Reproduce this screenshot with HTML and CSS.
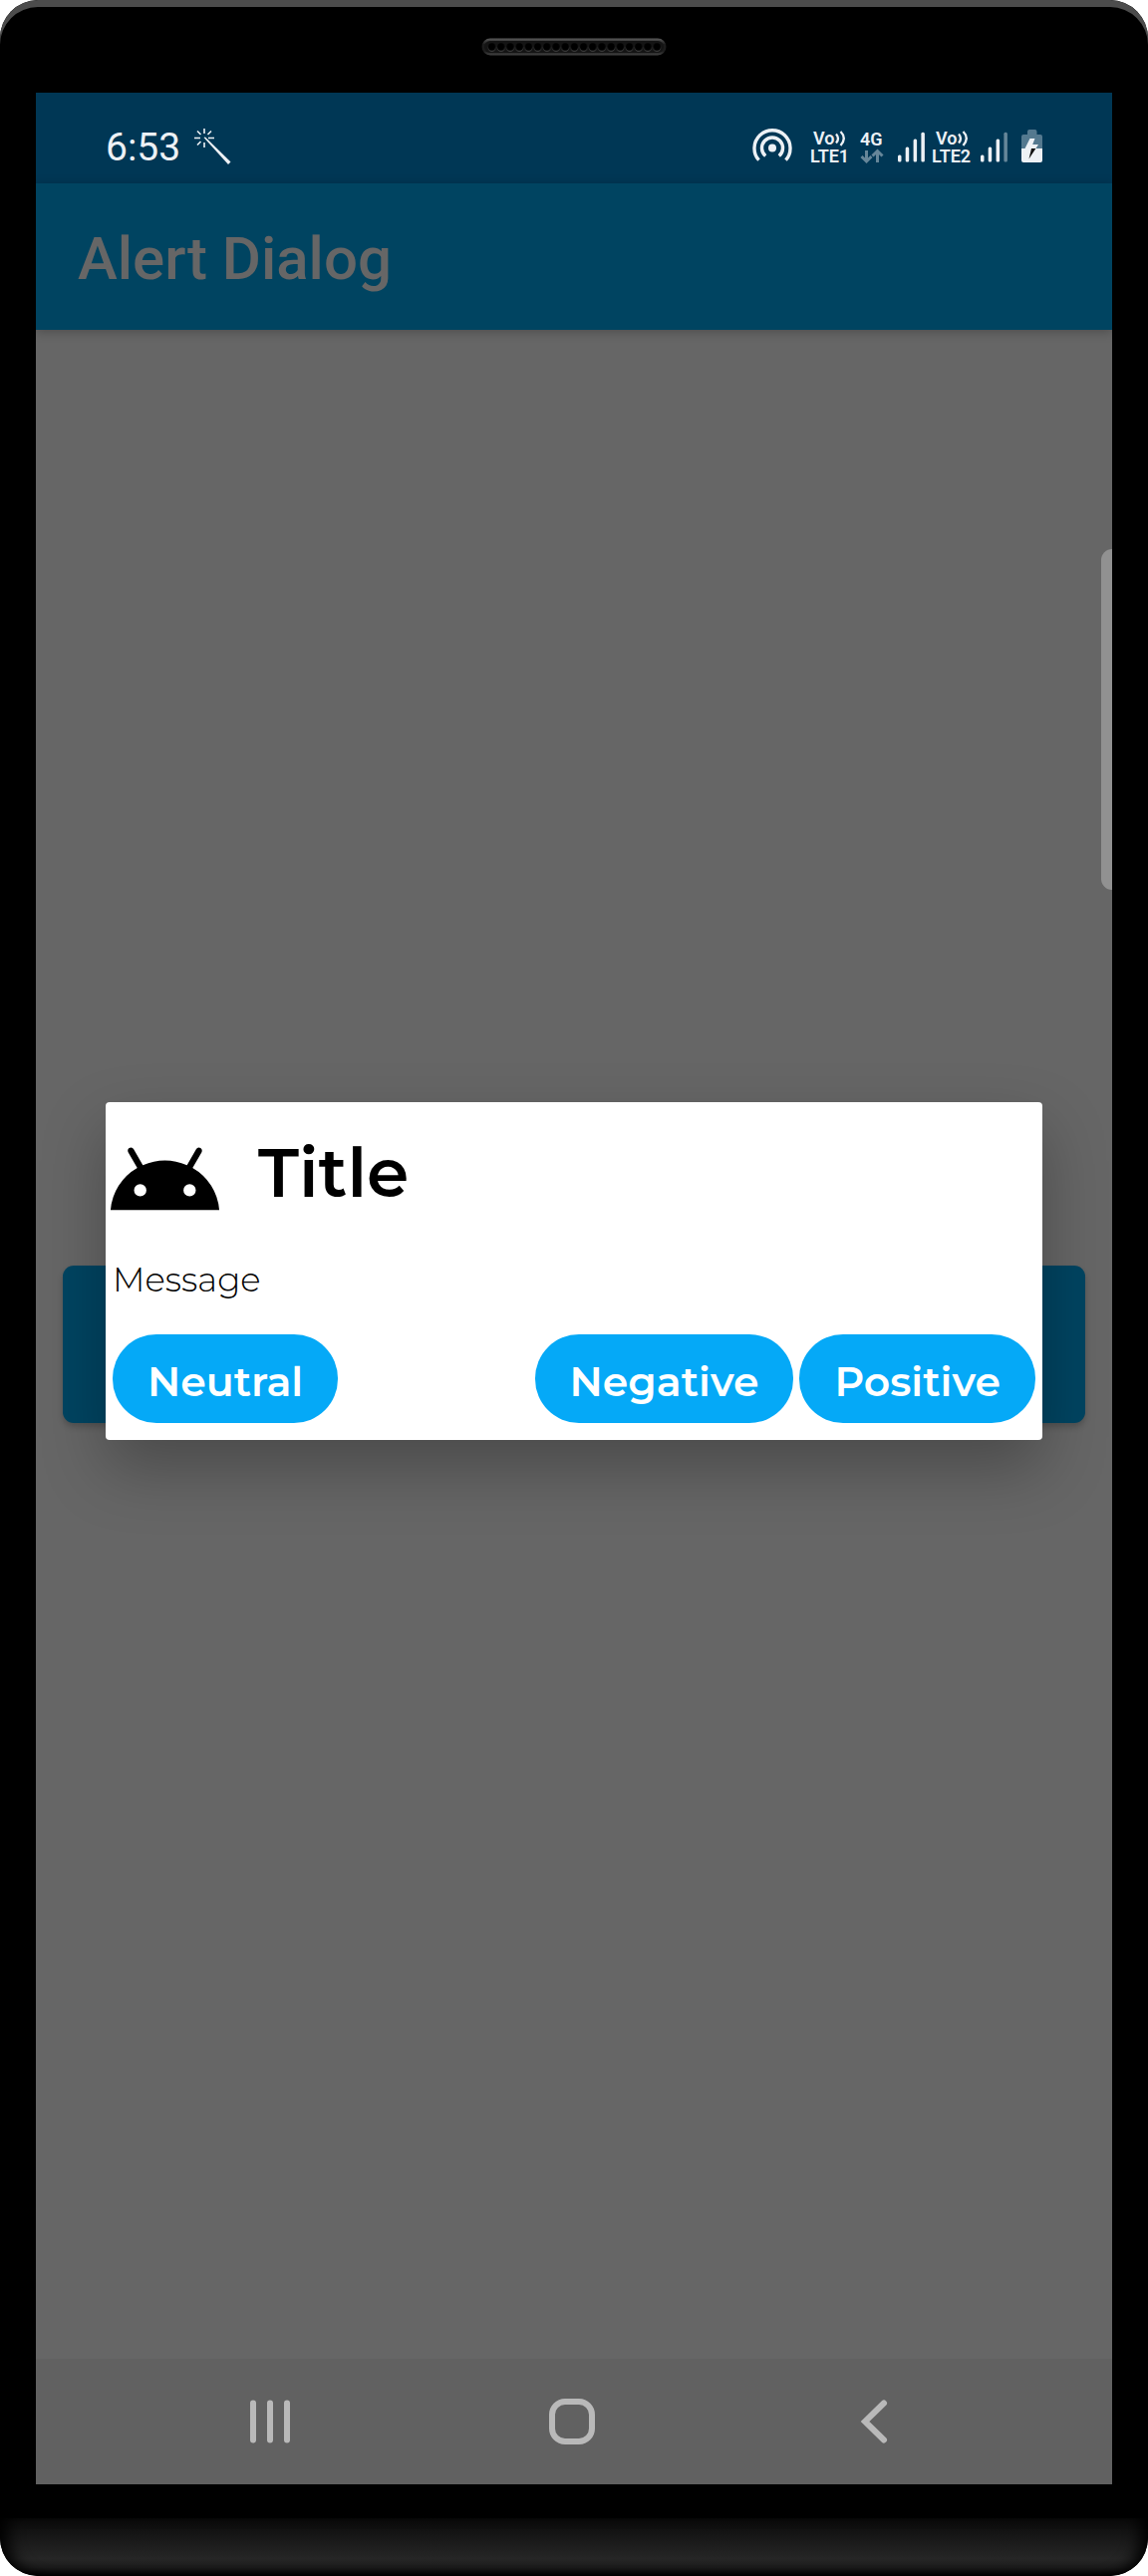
FILE: index.html
```html
<!DOCTYPE html>
<html lang="en">
<head>
<meta charset="utf-8">
<meta name="viewport" content="width=device-width, initial-scale=1">
<title>Alert Dialog</title>
<link rel="stylesheet" href="styles.css">
</head>
<body>
<div class="phone">
  <div class="bezel">
    <svg class="speaker" width="186" height="18" viewBox="0 0 186 18" aria-hidden="true">
      <defs>
        <linearGradient id="rim" x1="0" y1="0" x2="0" y2="1">
          <stop offset="0" stop-color="#5a5a5a"/><stop offset=".35" stop-color="#1c1c1c"/><stop offset=".75" stop-color="#1c1c1c"/><stop offset="1" stop-color="#444"/>
        </linearGradient>
        <pattern id="holes" x="6" y="0" width="9.2" height="18" patternUnits="userSpaceOnUse">
          <circle cx="4.6" cy="10" r="4" fill="#3a3a3a"/><circle cx="4.6" cy="9" r="3.7" fill="#000"/>
        </pattern>
      </defs>
      <rect x=".5" y=".5" width="185" height="17" rx="8.5" fill="url(#rim)"/>
      <rect x="3" y="3" width="180" height="12" rx="6" fill="#141414"/>
      <rect x="6" y="0" width="174.8" height="18" fill="url(#holes)"/>
    </svg>
  </div>

  <div class="screen">
    <div class="status-bar">
      <span class="clock">6:53</span>
      <svg class="wand" width="38" height="38" viewBox="0 0 38 38" aria-hidden="true">
        <g stroke="#edf1f5" stroke-width="1.6"><path d="M11 1v5M11 15v5M1 10.500h6M15 10.500h6M4 3.500l3.500 3.500M18 3.500l-3.500 3.500M4 17.500l3.500-3.500"/></g>
        <path d="M10.500 10l1.500-.5 25.500 25-2.500 2.500z" fill="#edf1f5"/>
      </svg>
      <div class="status-icons">
        <svg class="hotspot" width="40" height="40" viewBox="0 0 40 40" aria-hidden="true">
          <circle cx="20" cy="19.500" r="4" fill="#edf1f5"/>
          <g fill="none" stroke="#edf1f5" stroke-width="3.400"><path d="M13.200 27.500a10.500 10.500 0 1 1 13.600 0"/><path d="M6.500 31.700a18 18 0 1 1 27 0"/></g>
        </svg>
        <svg class="volte" width="44" height="40" viewBox="0 0 44 40">
          <text x="3" y="16" class="vo">Vo</text><text x="0" y="33.500" class="lte">LTE1</text>
          <path d="M26 5.500q4 4.500 0 9M30.500 3q6.500 6.500 0 14" fill="none" stroke="#edf1f5" stroke-width="2.300"/>
        </svg>
        <svg class="data" width="26" height="40" viewBox="0 0 26 40">
          <text x="0" y="16.500" class="lte">4G</text>
          <path d="M6.500 22v10.500M1.500 28l5 5 5-5M17.500 34V23M12.500 27.500l5-5 5 5" fill="none" stroke="#668699" stroke-width="3"/>
        </svg>
        <svg class="signal" width="29" height="40" viewBox="0 0 29 40" aria-hidden="true">
          <g fill="#edf1f5"><rect x="1" y="26.500" width="3.500" height="7" rx="1.500"/><rect x="8.700" y="18.500" width="3.500" height="15" rx="1.500"/><rect x="16.600" y="10.500" width="3.500" height="23" rx="1.500"/><rect x="24.400" y="3.800" width="3.500" height="29.700" rx="1.500"/></g>
        </svg>
        <svg class="volte second" width="44" height="40" viewBox="0 0 44 40">
          <text x="4" y="16" class="vo">Vo</text><text x="0" y="33.500" class="lte">LTE2</text>
          <path d="M27 5.500q4 4.500 0 9M31.500 3q6.500 6.500 0 14" fill="none" stroke="#edf1f5" stroke-width="2.300"/>
        </svg>
        <svg class="signal weak" width="29" height="40" viewBox="0 0 29 40" aria-hidden="true">
          <g fill="#edf1f5"><rect x="1" y="26.500" width="3.500" height="7" rx="1.500"/><rect x="8.700" y="18.500" width="3.500" height="15" rx="1.500"/><rect x="16.600" y="10.500" width="3.500" height="23" rx="1.500"/></g><rect x="24.400" y="3.800" width="3.500" height="29.700" rx="1.500" fill="#668699"/>
        </svg>
        <svg class="battery" width="21" height="40" viewBox="0 0 21 40" aria-hidden="true">
          <path d="M6 6V3q0-2 2-2h5.500q2 0 2 2v3H19q2 0 2 2v12H0V8q0-2 2-2z" fill="#54798f"/>
          <path d="M0 20h21v12q0 2-2 2H2q-2 0-2-2z" fill="#edf1f5"/>
          <path d="M8.500 10h5l-2.300 6H17l-2.600 4H3.500z" fill="#edf1f5"/>
          <path d="M10 20h4.400L7.500 30.500z" fill="#111"/>
        </svg>
      </div>
    </div>

    <div class="app">
      <header class="app-bar"><h1>Alert Dialog</h1></header>
      <main class="content"><button class="open-dialog" type="button" aria-label="Show dialog"></button></main>
      <div class="overlay">
        <section class="dialog" role="dialog" aria-labelledby="dialog-title" aria-describedby="dialog-message">
          <div class="dialog-head">
            <svg width="119" height="119" viewBox="0 0 24 24" aria-hidden="true"><path d="M17.600 9.480l1.840-3.180c.16-.31.04-.69-.26-.85a.637.637 0 0 0-.83.22l-1.880 3.240a11.463 11.463 0 0 0-8.940 0L5.650 5.670a.643.643 0 0 0-.87-.2c-.28.18-.37.54-.22.83L6.400 9.480A10.780 10.780 0 0 0 1 18h22a10.780 10.780 0 0 0-5.400-8.520zM7 15.250a1.250 1.250 0 1 1 0-2.500 1.250 1.250 0 0 1 0 2.500zm10 0a1.250 1.250 0 1 1 0-2.500 1.250 1.250 0 0 1 0 2.500z"/></svg>
            <h2 id="dialog-title">Title</h2>
          </div>
          <p id="dialog-message">Message</p>
          <div class="actions">
            <button class="action neutral" type="button">Neutral</button>
            <button class="action" type="button">Negative</button>
            <button class="action" type="button">Positive</button>
          </div>
        </section>
      </div>
    </div>

    <nav class="nav-bar">
      <button type="button" aria-label="Recent apps"><svg width="48" height="48" viewBox="0 0 48 48"><path d="M7 5.500v37M24 5.500v37M41 5.500v37"/></svg></button>
      <button type="button" aria-label="Home"><svg width="48" height="48" viewBox="0 0 48 48"><rect x="4" y="4" width="40" height="40" rx="13"/></svg></button>
      <button type="button" aria-label="Back"><svg width="48" height="48" viewBox="0 0 48 48"><path d="M34 5.500L15 24l19 18.500"/></svg></button>
    </nav>
    <div class="edge-handle"></div>
  </div>

  <div class="chin"></div>
</div>
</body>
</html>
```

FILE: styles.css
```css
* { box-sizing: border-box; }

body {
  margin: 0;
  background: #fff;
  font-family: Roboto, sans-serif;
}

h1, h2, p { margin: 0; }

button {
  padding: 0;
  border: 0;
  font: inherit;
}

svg { display: block; flex: none; }

.phone {
  display: flex;
  flex-direction: column;
  min-height: 100vh;
  overflow: hidden;
  border-radius: 38px;
  background: #000;
}

.bezel {
  display: flex;
  justify-content: center;
  height: 93px;
  padding-top: 38px;
  border-radius: 38px 38px 0 0;
  box-shadow: inset 0 7px 0 #4c4c4c;
}

.screen {
  position: relative;
  display: flex;
  flex: 1;
  flex-direction: column;
  margin: 0 36px;
  overflow: hidden;
  background: #666;
}

.status-bar {
  display: flex;
  align-items: center;
  height: 91px;
  padding: 16px 70px 0 70px;
  background: #003755;
  color: #edf1f5;
}

.clock {
  padding-top: 2px;
  font-size: 39px;
  line-height: 48px;
}

.wand { margin-left: 13px; }

.status-icons {
  display: flex;
  margin-left: auto;
  padding-top: 4px;
}

.status-icons text {
  fill: #edf1f5;
  font-family: Roboto, sans-serif;
  font-weight: 600;
}

.vo { font-size: 18px; }
.lte { font-size: 18px; }
.volte { margin-left: 18px; }
.data { margin-left: 6px; }
.signal { margin-left: 11px; }
.second { margin-left: 6px; }
.weak { margin-left: 4px; }
.battery { margin-left: 13px; }

.app {
  position: relative;
  display: flex;
  flex: 1;
  flex-direction: column;
}

.app-bar {
  display: flex;
  align-items: center;
  height: 147px;
  padding: 4px 42px 0;
  background: #004461;
  box-shadow: 0 2px 10px rgba(0, 0, 0, .25);
}

.app-bar h1 {
  color: #666;
  font-size: 60px;
  font-weight: 500;
  line-height: 72px;
}

.content {
  display: flex;
  flex: 1;
  align-items: center;
  padding: 0 27px;
}

.open-dialog {
  flex: 1;
  height: 158px;
  border-radius: 11px;
  background: #004461;
  box-shadow: 0 4px 6px rgba(0, 0, 0, .2);
}

.overlay {
  position: absolute;
  inset: 0;
  display: flex;
  align-items: center;
  padding: 0 70px;
}

.dialog {
  flex: 1;
  padding: 19px 7px 17px;
  border-radius: 4px;
  background: #fff;
  box-shadow: 0 28px 64px rgba(0, 0, 0, .28);
  color: #000;
  font-family: Montserrat, Inter, sans-serif;
}

.dialog-head {
  display: flex;
  margin-left: -7px;
}

.dialog h2 {
  margin-left: 34px;
  font-size: 68px;
  font-weight: 600;
  line-height: 104px;
}

.dialog p {
  margin: 16px 0 31px;
  font-size: 34px;
  font-weight: 300;
  line-height: 48px;
}

.actions {
  display: flex;
  gap: 6px;
}

.action {
  height: 89px;
  padding: 4px 35px 0;
  border-radius: 44px;
  background: #05a9f7;
  color: #fff;
  font-size: 41px;
  font-weight: 600;
  line-height: 52px;
}

.neutral { margin-right: auto; }

.nav-bar {
  display: flex;
  justify-content: space-around;
  height: 126px;
  padding: 0 88px 0 84px;
  background: #616161;
}

.nav-bar button {
  display: flex;
  flex: 1;
  align-items: center;
  justify-content: center;
  background: none;
}

.nav-bar svg {
  fill: none;
  stroke: #b9b9b9;
  stroke-width: 6px;
  stroke-linecap: round;
}

.edge-handle {
  position: absolute;
  top: 458px;
  right: 0;
  width: 11px;
  height: 342px;
  border-radius: 11px 0 0 11px;
  background: #919191;
}

.chin {
  height: 58px;
  margin-top: 34px;
  border-radius: 0 0 38px 38px;
  background: linear-gradient(#0a0a0a, #181818 35%, #262626 70%, #1c1c1c 85%, #000);
  box-shadow: inset 16px 0 16px -8px #000, inset -16px 0 16px -8px #000;
}
```
